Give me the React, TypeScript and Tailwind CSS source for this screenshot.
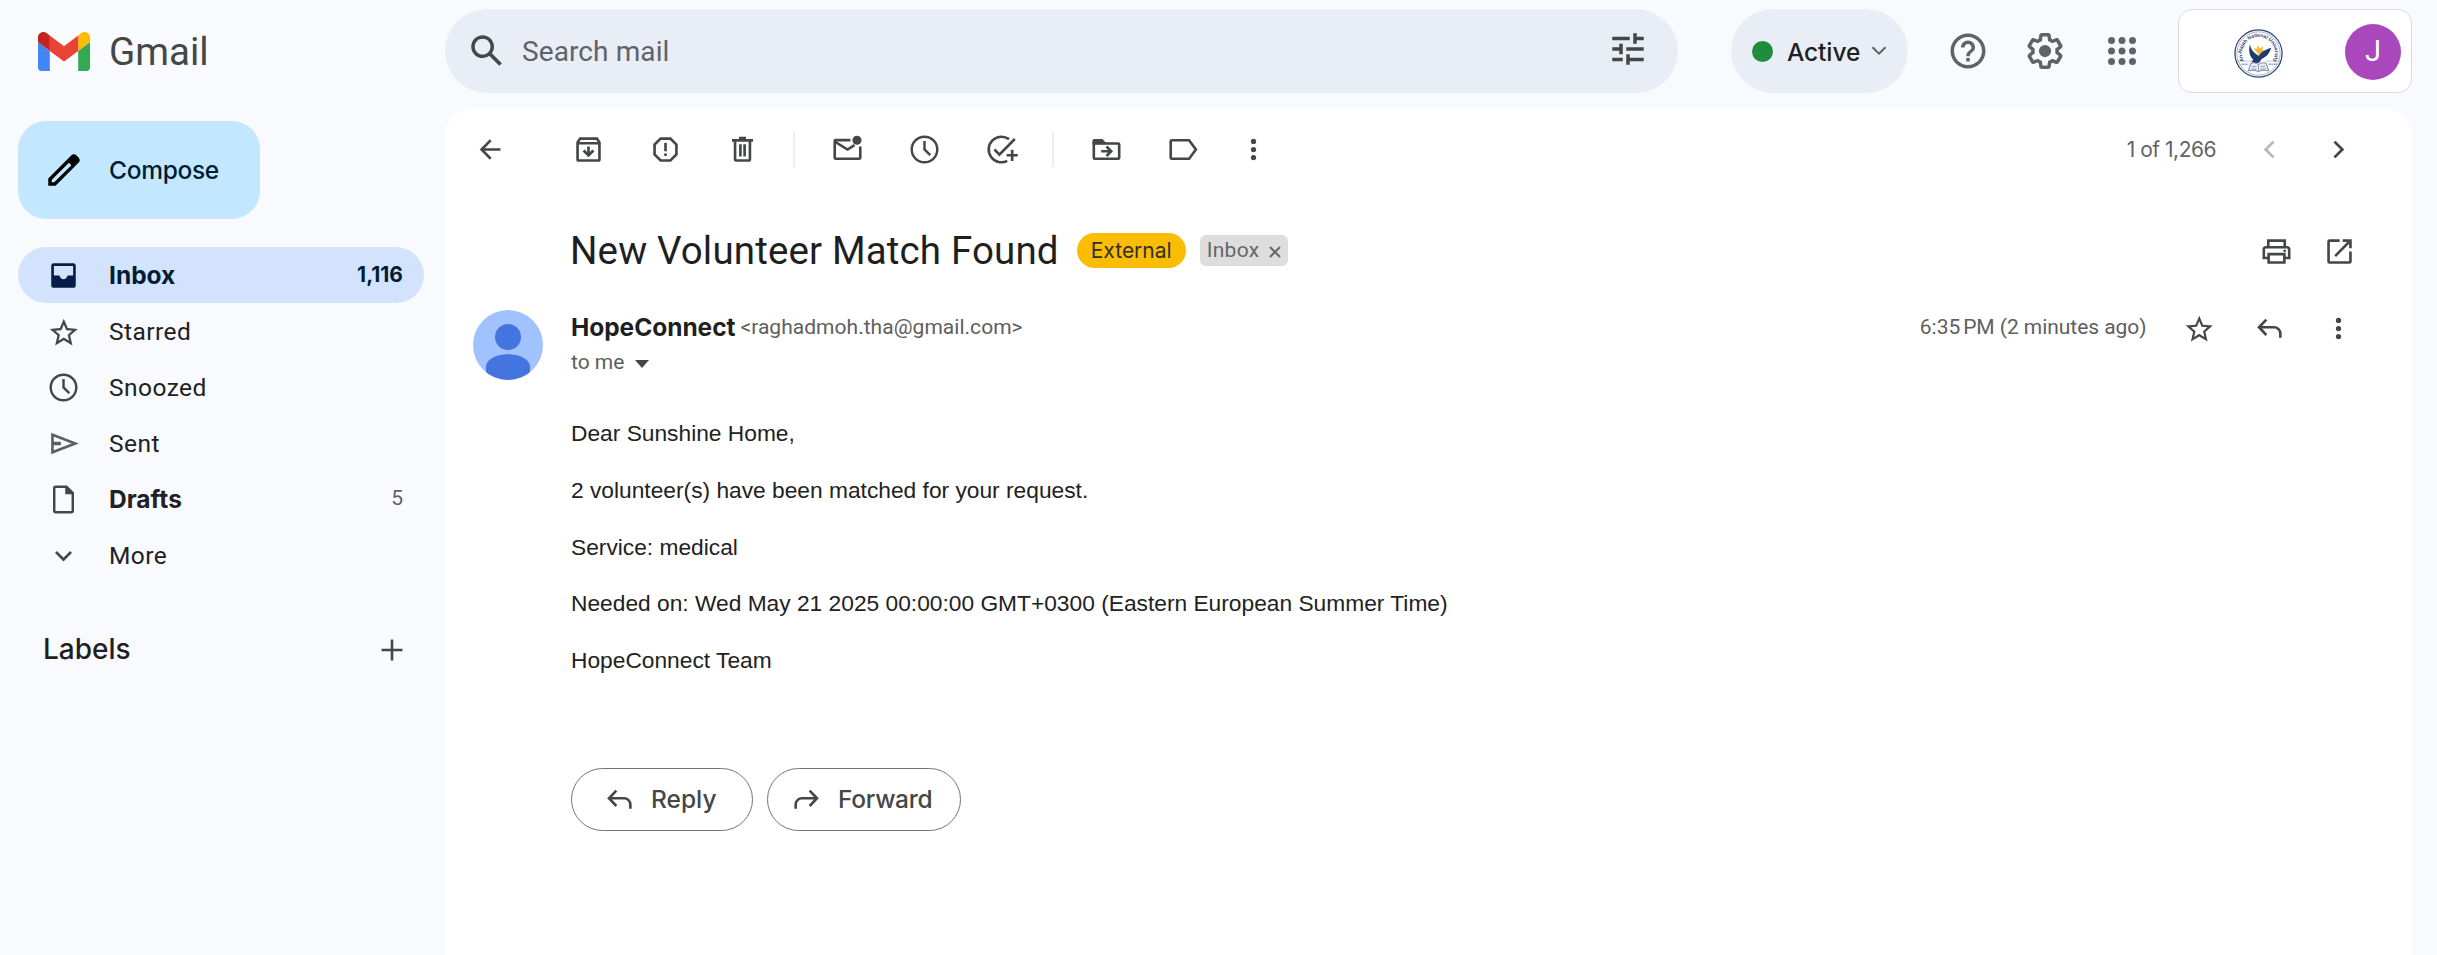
import type { ReactNode } from "react";

const INTER = "font-['Inter',sans-serif]";

function Icon({ children, className = "size-[35px]" }: { children: ReactNode; className?: string }) {
  return (
    <svg viewBox="0 0 20 20" className={`shrink-0 ${className}`} fill="none" stroke="currentColor" strokeWidth="1.5">
      {children}
    </svg>
  );
}

function Solid({ d, className = "size-[42px]" }: { d: string; className?: string }) {
  return (
    <svg viewBox="0 0 24 24" className={`shrink-0 ${className}`} fill="currentColor">
      <path d={d} />
    </svg>
  );
}

const STAR =
  "M22 9.24l-7.19-.62L12 2 9.19 8.63 2 9.24l5.46 4.73L5.82 21 12 17.27 18.18 21l-1.63-7.03L22 9.24zM12 15.4l-3.76 2.27 1-4.28-3.32-2.88 4.38-.38L12 6.1l1.71 4.04 4.38.38-3.32 2.88 1 4.28L12 15.4z";
const SEARCH =
  "M20.49 19l-5.73-5.73C15.53 12.2 16 10.91 16 9.5 16 5.91 13.09 3 9.5 3S3 5.91 3 9.5 5.91 16 9.5 16c1.41 0 2.7-.47 3.77-1.24L19 20.49 20.49 19zM5 9.5C5 7.01 7.01 5 9.5 5S14 7.01 14 9.5 11.99 14 9.5 14 5 11.99 5 9.5z";
const TUNE =
  "M3 17v2h6v-2H3zM3 5v2h10V5H3zm10 16v-2h8v-2h-8v-2h-2v6h2zM7 9v2H3v2h4v2h2V9H7zm14 4v-2H11v2h10zm-6-4h2V7h4V5h-4V3h-2v6z";
const HELP =
  "M11 18h2v-2h-2v2zm1-16C6.48 2 2 6.48 2 12s4.48 10 10 10 10-4.48 10-10S17.52 2 12 2zm0 18c-4.41 0-8-3.59-8-8s3.59-8 8-8 8 3.59 8 8-3.59 8-8 8zm0-14c-2.21 0-4 1.79-4 4h2c0-1.1.9-2 2-2s2 .9 2 2c0 2-3 1.75-3 5h2c0-2.25 3-2.5 3-5 0-2.21-1.79-4-4-4z";
const GEAR =
  "M13.85 22.25h-3.7c-.74 0-1.36-.54-1.45-1.27l-.27-1.89c-.27-.14-.53-.29-.79-.46l-1.8.72c-.7.26-1.47-.03-1.81-.65L2.2 15.53c-.35-.66-.2-1.44.36-1.88l1.53-1.19c-.01-.15-.02-.3-.02-.46 0-.15.01-.31.02-.46l-1.52-1.19c-.59-.45-.74-1.26-.37-1.88l1.85-3.19c.34-.62 1.11-.9 1.79-.63l1.81.73c.26-.17.52-.32.78-.46l.27-1.91c.09-.7.71-1.25 1.44-1.25h3.7c.74 0 1.36.54 1.45 1.27l.27 1.89c.27.14.53.29.79.46l1.8-.72c.71-.26 1.48.03 1.82.65l1.84 3.18c.36.66.2 1.44-.36 1.88l-1.52 1.19c.01.15.02.3.02.46s-.01.31-.02.46l1.52 1.19c.56.45.72 1.23.37 1.86l-1.86 3.22c-.34.62-1.11.9-1.8.63l-1.8-.72c-.26.17-.52.32-.78.46l-.27 1.91c-.1.68-.72 1.22-1.46 1.22zm-3.23-2h2.76l.37-2.55.53-.22c.44-.18.88-.44 1.34-.78l.45-.34 2.38.96 1.38-2.4-2.03-1.58.07-.56c.03-.26.06-.51.06-.78s-.03-.53-.06-.78l-.07-.56 2.03-1.58-1.39-2.4-2.39.96-.45-.35c-.42-.32-.87-.58-1.33-.77l-.52-.22-.37-2.55h-2.76l-.37 2.55-.53.21c-.44.19-.88.44-1.34.79l-.45.33-2.38-.95-1.39 2.39 2.03 1.58-.07.56a7 7 0 0 0-.06.79c0 .26.02.53.06.78l.07.56-2.03 1.58 1.38 2.4 2.39-.96.45.35c.43.33.86.58 1.33.77l.53.22.38 2.55zM12 8.5a3.5 3.5 0 1 1 0 7 3.5 3.5 0 0 1 0-7z";
const PENCIL =
  "M20.41 4.94l-1.35-1.35c-.78-.78-2.05-.78-2.83 0L3 16.82V21h4.18L20.41 7.77c.79-.78.79-2.05 0-2.83zm-14 14.12L5 19v-1.36l9.82-9.82 1.41 1.41-9.82 9.83z";

const Clock = () => (
  <Icon>
    <circle cx="10" cy="10" r="7.3" strokeWidth="1.4" />
    <path d="M10 5.2V10l3.3 3.2" strokeWidth="1.4" />
  </Icon>
);

const Dots = () => (
  <Icon>
    <g fill="currentColor" stroke="none">
      <circle cx="10" cy="5.4" r="1.5" />
      <circle cx="10" cy="10" r="1.5" />
      <circle cx="10" cy="14.6" r="1.5" />
    </g>
  </Icon>
);

const ReplyIcon = () => (
  <Icon>
    <path d="M8.2 4.9L4 9.3l4.2 4.4M4 9.3h8.6a3.6 3.6 0 0 1 3.6 3.6v2.4" />
  </Icon>
);

const ForwardIcon = () => (
  <Icon>
    <path d="M11.8 4.9L16 9.3l-4.2 4.4M16 9.3H7.4a3.6 3.6 0 0 0-3.6 3.6v2.4" />
  </Icon>
);

function GmailLogo() {
  return (
    <svg viewBox="52 42 88 66" className="h-[39px] w-[52px]">
      <path fill="#4285f4" d="M58 108h14V74L52 59v43c0 3.32 2.69 6 6 6" />
      <path fill="#34a853" d="M120 108h14c3.32 0 6-2.69 6-6V59l-20 15" />
      <path fill="#fbbc04" d="M120 48v26l20-15v-8c0-7.42-8.47-11.65-14.4-7.2" />
      <path fill="#ea4335" d="M72 74V48l24 18 24-18v26L96 92" />
      <path fill="#c5221f" d="M52 51v8l20 15V48l-5.6-4.2c-5.94-4.45-14.4-.22-14.4 7.2" />
    </svg>
  );
}

function UniversitySeal() {
  return (
    <svg viewBox="0 0 48 48" className="size-[49px]">
      <defs>
        <path id="seal-arc" d="M9.6 31.3A16.2 16.2 0 1 1 38.4 31.3" />
      </defs>
      <circle cx="24" cy="24" r="23.1" fill="#fff" stroke="#2a4373" strokeWidth="1.2" />
      <circle cx="24" cy="24" r="21.2" fill="none" stroke="#6f82a8" strokeWidth="0.6" />
      <text fill="#2a4373" fontSize="5" fontWeight="700" fontFamily="Liberation Sans">
        <textPath href="#seal-arc" textLength="66">An-Najah National University</textPath>
      </text>
      <path d="M24 25l-5-6.5 3.400 1.200 1-4.200 1.800 3.800 3.600-2.600-1 4.200 4.200-.3-3.400 3z" fill="#f6b73c" />
      <path d="M15.500 15c1 4.500 2.500 6.500 6 9.500l2.500 1.800c3-4 6.500-6 12.500-8-1.500 5-4 8.500-9.500 11l-2.300 3.800-4 .2-3.700-1.300 2-1.800c-3.500-3-5-8-3.500-15.200z" fill="#1f3a6b" />
      <path d="M3 31.500h14M31 31.500h14" stroke="#8493b3" strokeWidth="0.5" />
      <path d="M7 34.500h7M34 34.500h8" stroke="#8493b3" strokeWidth="1.300" strokeDasharray="1.200 .5" />
      <path d="M16.500 33.500c3-.8 5.500-.3 7.500 1.200 2-1.500 4.500-2 7.500-1.200l2.500 7.500c-4-1-7.500-.7-10 1-2.500-1.700-6-2-10-1z" fill="#e9edf4" stroke="#5b6f98" strokeWidth="0.8" />
      <path d="M24 35v6.500M17.500 36.500l4.500.5M17 39l5 .5M26 37l4.500-.5M26 39.500l5-.5" stroke="#5b6f98" strokeWidth="0.600" />
    </svg>
  );
}

function Header() {
  return (
    <header className="flex h-[108px] shrink-0 items-start pt-[9px]">
      <div className="flex h-[84px] w-[445px] items-center pl-[38px]">
        <GmailLogo />
        <span className="ml-[19px] mt-[3px] text-[38.5px] leading-none text-[#444746]">Gmail</span>
      </div>
      <div className="flex h-[84px] w-[1233px] items-center rounded-full bg-[#e9edf6] pl-[21px] pr-[29px] text-[#444746]">
        <Solid d={SEARCH} />
        <span className="ml-[14px] mt-[2px] flex-1 text-[28px] tracking-[0.1px] text-[#5f6368]">Search mail</span>
        <Solid d={TUNE} className="mb-1 size-[42px]" />
      </div>
      <div className="ml-[53px] flex h-[84px] w-[177px] items-center rounded-full bg-[#e9edf6] pl-[21px]">
        <span className="mt-[1px] size-[21px] rounded-full bg-[#1e8e3e]" />
        <span className={`${INTER} ml-[14px] mt-[2px] text-[24.5px] font-medium tracking-[-0.1px] text-[#1f1f1f]`}>Active</span>
        <svg viewBox="0 0 16 10" className="ml-[11px] h-[10px] w-[16px] text-[#5f6368]" fill="none" stroke="currentColor" strokeWidth="2">
          <path d="M1.500 1.200L8 7.700l6.500-6.500" />
        </svg>
      </div>
      <div className="ml-[39px] flex h-[84px] items-center gap-[35px] text-[#5f6368]">
        <Solid d={HELP} />
        <Solid d={GEAR} />
        <svg viewBox="0 0 24 24" className="size-[42px]" fill="currentColor">
          {[6, 12, 18].map((y) => [6, 12, 18].map((x) => <circle key={`${x}-${y}`} cx={x} cy={y} r="2" />))}
        </svg>
      </div>
      <div className="ml-[35px] flex h-[84px] w-[234px] items-center rounded-[14px] border border-[#dadce0] bg-white pl-[55px] pr-[10px]">
        <div className="mt-[4px]">
          <UniversitySeal />
        </div>
        <div className="ml-auto mt-[2px] flex size-[56px] items-center justify-center rounded-full bg-[#ab47bc] text-[29px] text-white">J</div>
      </div>
    </header>
  );
}

function NavRow({ icon, label, count, active, bold }: { icon: ReactNode; label: string; count?: string; active?: boolean; bold?: boolean }) {
  return (
    <div className={`flex h-[56px] items-center rounded-full pl-[28px] pr-[21px] ${active ? "bg-[#d3e3fd] text-[#041e49]" : "text-[#444746]"}`}>
      {icon}
      <span className={`ml-[28px] flex-1 text-[24.5px] ${active ? "text-[#001d35]" : "text-[#202124]"} ${bold ? `${INTER} pt-px font-bold` : "pt-[2px] tracking-[0.45px]"}`}>
        {label}
      </span>
      {count && <span className={`text-[21px] ${active ? `${INTER} font-bold text-[#001d35]` : "text-[#5f6368]"}`}>{count}</span>}
    </div>
  );
}

function Sidebar() {
  return (
    <aside className="w-[445px] shrink-0 pl-[18px] pt-[13px]">
      <button className="flex h-[98px] w-[242px] items-center rounded-[28px] bg-[#c2e7ff] pl-[25px] text-black">
        <Solid d={PENCIL} />
        <span className={`${INTER} ml-[24px] text-[24.5px] font-medium tracking-[-0.3px] text-[#001d35]`}>Compose</span>
      </button>
      <nav className="mt-[28px] w-[406px]">
        <NavRow
          active
          bold
          label="Inbox"
          count="1,116"
          icon={
            <Icon>
              <path
                fill="currentColor"
                stroke="none"
                fillRule="evenodd"
                d="M4.500 3h11A1.500 1.500 0 0 1 17 4.500v11a1.500 1.500 0 0 1-1.500 1.500h-11A1.500 1.500 0 0 1 3 15.500v-11A1.500 1.500 0 0 1 4.500 3zm0 1.600v5.400h3.200c.35 1.200 1.200 2.200 2.300 2.200s1.950-1 2.300-2.200h3.200V4.600z"
              />
            </Icon>
          }
        />
        <NavRow label="Starred" icon={<span className="flex w-[35px] justify-center pt-[4px]"><Solid d={STAR} className="size-[33.6px]" /></span>} />
        <NavRow label="Snoozed" icon={<Clock />} />
        <NavRow
          label="Sent"
          icon={
            <Icon>
              <path d="M3.700 5L16.700 10 3.700 15z" stroke="#5c5e5e" />
              <path d="M3.700 10h4.800" stroke="#5c5e5e" strokeWidth="2" />
            </Icon>
          }
        />
        <NavRow
          bold
          label="Drafts"
          count="5"
          icon={
            <Icon>
              <path d="M5.500 2.700h6.200l3.600 3.600v10.200a.8.8 0 0 1-.8.8h-9a.8.8 0 0 1-.8-.8v-13a.8.8 0 0 1 .8-.8z" strokeWidth="1.400" />
              <path d="M11 2.500V7h4.500z" fill="currentColor" stroke="none" />
            </Icon>
          }
        />
        <NavRow
          label="More"
          icon={
            <Icon>
              <path d="M5.700 8l4.300 4.300L14.300 8" strokeWidth="1.500" />
            </Icon>
          }
        />
      </nav>
      <div className="mt-[38px] flex h-[56px] w-[385px] items-center justify-between pl-[25px]">
        <span className={`${INTER} text-[28px] font-medium text-[#1f1f1f]`}>Labels</span>
        <svg viewBox="0 0 22 22" className="mt-px size-[22px] text-[#444746]" stroke="currentColor" strokeWidth="2.600">
          <path d="M11 0.500v21M.5 11h21" />
        </svg>
      </div>
    </aside>
  );
}

function Toolbar() {
  return (
    <div className="flex h-[83px] items-center pl-[28px] text-[#444746]">
      <Icon>
        <path d="M15.700 10H5M10.100 4.700L4.900 10l5.200 5.300" />
      </Icon>
      <div className="ml-[63px] flex gap-[42px]">
        <Icon>
          <path d="M3.750 6L5.200 3.750h9.600L16.250 6v9.500a.75.75 0 0 1-.75.75h-11a.75.75 0 0 1-.75-.75zM3.750 6.400h12.500M10 8.300v5" />
          <path d="M7.200 10.600L10 13.300l2.800-2.700" strokeWidth="1.600" />
        </Icon>
        <Icon>
          <path d="M7.200 3.750h5.600l3.450 3.450v5.600l-3.450 3.450H7.200L3.750 12.800V7.200z" />
          <path d="M10 6.200v4.800" strokeWidth="1.500" />
          <circle cx="10" cy="13" r=".85" fill="currentColor" stroke="none" />
        </Icon>
        <Icon>
          <path d="M4 4.750h12M8 3.500h4M5.750 5v10.750c0 .3.200.5.500.5h7.500c.3 0 .5-.2.500-.5V5M8.800 7v7M11.200 7v7" />
        </Icon>
      </div>
      <span className="ml-[33px] h-[35px] w-[2px] bg-[#eceff1]" />
      <div className="ml-[35px] flex gap-[42px]">
        <Icon>
          <path d="M11.700 4.650H3.300a.6.6 0 0 0-.6.6v9.500c0 .3.250.55.6.55h13.400c.35 0 .6-.25.6-.55V8.300" />
          <path d="M3 5.700l7 4.300 4-2.500" />
          <circle cx="15.400" cy="4.700" r="2.600" fill="currentColor" stroke="none" />
        </Icon>
        <Clock />
        <Icon className="size-[35px] overflow-visible">
          <path d="M14.300 4.100A7.300 7.300 0 1 0 13.300 16.500M6 10l2.800 2.900L17.600 4M16.100 10.100v6.400M12.900 13.300h6.400" />
        </Icon>
      </div>
      <span className="ml-[33px] h-[35px] w-[2px] bg-[#eceff1]" />
      <div className="ml-[35px] flex gap-[42px]">
        <Icon>
          <path d="M2.750 5.500v9.200c0 .3.200.55.55.55h13.400c.35 0 .55-.25.55-.55V7.100c0-.3-.2-.55-.55-.55H2.750" />
          <path d="M2 7V5a1 1 0 0 1 1-1h4.700L10 6.500 9 7z" fill="currentColor" stroke="none" />
          <path d="M7 11h5.200M10 8.300l2.700 2.700-2.700 2.700" />
        </Icon>
        <Icon>
          <path d="M3.300 4.700h9.900L17.100 10l-3.900 5.300H3.300a.6.6 0 0 1-.6-.6V5.300c0-.3.300-.6.600-.6z" />
        </Icon>
      </div>
      <div className="ml-[35px]">
        <Dots />
      </div>
      <span className={`${INTER} ml-auto text-[21px] tracking-[-0.500px] text-[#5f6368]`}>1 of 1,266</span>
      <div className="ml-[36px] mr-[56px] flex gap-[34px]">
        <Icon className="size-[35px] text-[#b7b9b9]">
          <path d="M12.300 5.500L7.800 10l4.500 4.500" strokeWidth="1.600" />
        </Icon>
        <Icon>
          <path d="M7.700 5.500l4.500 4.500-4.500 4.500" strokeWidth="1.600" />
        </Icon>
      </div>
    </div>
  );
}

function SubjectRow() {
  return (
    <div className="flex h-[84px] items-center pl-[125px] pr-[55px] pt-[35px]">
      <h1 className="text-[38.5px] leading-[42px] tracking-[0.15px] text-[#1f1f1f]">New Volunteer Match Found</h1>
      <span className={`${INTER} ml-[18px] flex h-[35px] w-[109px] items-center justify-center rounded-full bg-[#fbbc04] text-[21px] text-[#303030]`}>
        External
      </span>
      <span className="ml-[14px] flex h-[31px] w-[88px] items-center rounded-[6px] bg-[#ddd] pl-[7px] text-[21px] text-[#666]">
        <span className="tracking-[0.300px]">Inbox</span>
        <svg viewBox="0 0 12 12" className="ml-[10px] mt-[2px] size-[12px]" stroke="currentColor" strokeWidth="2">
          <path d="M1 1l10 10M11 1L1 11" />
        </svg>
      </span>
      <div className="ml-auto mt-px flex gap-[28px] text-[#444746]">
        <Icon>
          <path d="M5.300 7V3.750h9.400V7M5.300 13.700H2.750V8.800c0-.7.500-1.250 1.250-1.250h12c.75 0 1.250.55 1.250 1.250v4.900H14.700M5.500 11.500h9v4.750h-9z" />
          <circle cx="14.700" cy="9.600" r=".8" fill="currentColor" stroke="none" />
        </Icon>
        <Icon>
          <path d="M10.100 3.750H4.300c-.3 0-.55.25-.55.55v11.400c0 .3.250.55.55.55h11.400c.3 0 .55-.25.55-.55V10M11.800 3.750h4.450V8.200M16 4l-8.500 8.600" />
        </Icon>
      </div>
    </div>
  );
}

function SenderRow() {
  return (
    <div className="flex pl-[28px] pt-[35px]">
      <svg viewBox="0 0 70 70" className="size-[70px]">
        <defs>
          <clipPath id="avatar-clip">
            <circle cx="35" cy="35" r="35" />
          </clipPath>
        </defs>
        <g clipPath="url(#avatar-clip)">
          <rect width="70" height="70" fill="#a0c3ff" />
          <circle cx="35" cy="27" r="13" fill="#4374e0" />
          <path d="M13 70V57c0-8 11-12.800 22-12.800S57 49 57 57v13z" fill="#4374e0" />
        </g>
      </svg>
      <div className="ml-[28px]">
        <div className="flex h-[35px] items-center">
          <span className={`${INTER} text-[24.5px] font-bold tracking-[-0.050px] text-[#1f1f1f]`}>HopeConnect</span>
          <span className="ml-[5px] text-[21px] tracking-[0.030px] text-[#5e5e5e]">&lt;raghadmoh.tha@gmail.com&gt;</span>
        </div>
        <div className="flex h-[35px] items-center text-[21px] text-[#5e5e5e]">
          to me
          <span className="ml-[11px] mt-[2px] border-x-[7px] border-t-[8px] border-x-transparent border-t-[#444746]" />
        </div>
      </div>
      <div className="ml-auto mr-[56px] flex h-[35px] items-center text-[#444746]">
        <span className="text-[21px] tracking-[-0.050px] text-[#5e5e5e]">
          6:35<span className="ml-[3px]">PM (2 minutes ago)</span>
        </span>
        <Solid d={STAR} className="ml-[36px] mt-[4px] size-[32.500px]" />
        <div className="ml-[37px] mt-[2px] flex gap-[34px]">
          <ReplyIcon />
          <Dots />
        </div>
      </div>
    </div>
  );
}

const PARAGRAPHS = [
  "Dear Sunshine Home,",
  "2 volunteer(s) have been matched for your request.",
  "Service: medical",
  "Needed on: Wed May 21 2025 00:00:00 GMT+0300 (Eastern European Summer Time)",
  "HopeConnect Team",
];

function MailBody() {
  return (
    <div className="flex flex-col gap-[22.75px] pl-[126px] pt-[36px] font-['Liberation_Sans',sans-serif] text-[22.75px] leading-[34px] text-[#222]">
      {PARAGRAPHS.map((p) => (
        <p key={p}>{p}</p>
      ))}
    </div>
  );
}

export default function App() {
  return (
    <div className="flex h-[955px] w-full flex-col overflow-hidden whitespace-nowrap bg-[#f9fafe] font-['Roboto',sans-serif]">
      <Header />
      <div className="flex flex-1">
        <Sidebar />
        <main className="mr-[25px] flex-1 rounded-t-[28px] bg-white">
          <Toolbar />
          <SubjectRow />
          <SenderRow />
          <MailBody />
          <div className={`${INTER} mt-[91px] flex gap-[14px] pl-[126px] text-[24.5px] font-medium text-[#444746]`}>
            <button className="flex h-[63px] w-[182px] items-center rounded-full border border-[#747775] pl-[30px]">
              <ReplyIcon />
              <span className="ml-[14px]">Reply</span>
            </button>
            <button className="flex h-[63px] w-[194px] items-center rounded-full border border-[#747775] pl-[21px]">
              <ForwardIcon />
              <span className="ml-[14px] tracking-[-0.300px]">Forward</span>
            </button>
          </div>
        </main>
      </div>
    </div>
  );
}
